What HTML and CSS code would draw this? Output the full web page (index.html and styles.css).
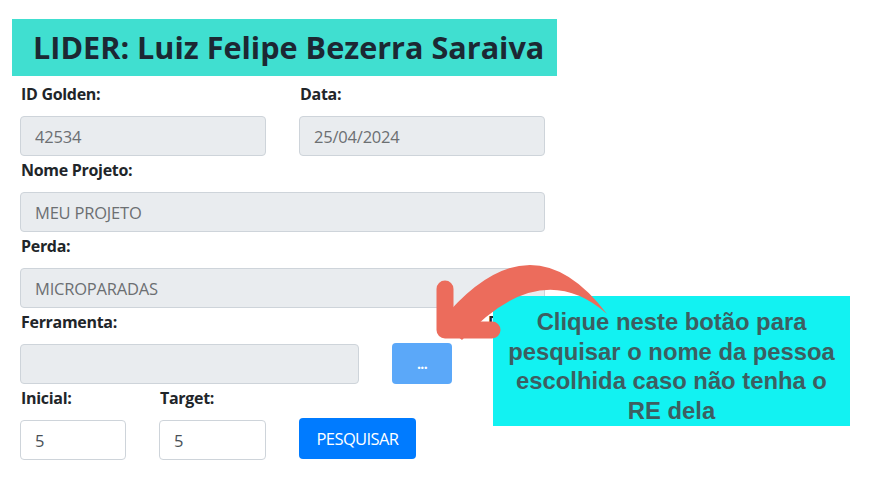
FILE: index.html
```html
<!DOCTYPE html>
<html lang="pt-BR">
<head>
<meta charset="utf-8">
<title>Líder</title>
<link rel="stylesheet" href="styles.css">
</head>
<body>
<div class="page">
  <h1 class="title">LIDER: Luiz Felipe Bezerra Saraiva</h1>
  <form class="form">
    <div class="row cols-2">
      <div class="field">
        <label>ID Golden:</label>
        <input class="input disabled" value="42534" disabled>
      </div>
      <div class="field">
        <label>Data:</label>
        <input class="input disabled" value="25/04/2024" disabled>
      </div>
    </div>
    <div class="row">
      <div class="field">
        <label>Nome Projeto:</label>
        <input class="input disabled" value="MEU PROJETO" disabled>
      </div>
    </div>
    <div class="row">
      <div class="field">
        <label>Perda:</label>
        <input class="input disabled" value="MICROPARADAS" disabled>
      </div>
    </div>
    <div class="row cols-tool">
      <div class="field">
        <label>Ferramenta:</label>
        <input class="input disabled" value="" disabled>
      </div>
      <div class="field">
        <label>&nbsp;</label>
        <button type="button" class="btn btn-light-primary">...</button>
      </div>
      <div class="field field-re">
        <label>RE:</label>
        <input class="input" value="">
      </div>
    </div>
    <div class="row cols-num">
      <div class="field">
        <label>Inicial:</label>
        <input class="input" value="5">
      </div>
      <div class="field">
        <label>Target:</label>
        <input class="input" value="5">
      </div>
      <div class="field">
        <label>&nbsp;</label>
        <button type="button" class="btn btn-primary">PESQUISAR</button>
      </div>
    </div>
  </form>
</div>

<div class="callout">Clique neste botão para pesquisar o nome da pessoa escolhida caso não tenha o RE dela</div>

<svg class="arrow" width="875" height="500" viewBox="0 0 875 500" aria-hidden="true">
  <path d="M440 322 Q530 212 607 314 Q540 255 462 340 Z" fill="#ec6c5c"/>
  <polyline points="445,289 445,330 492,330" fill="none" stroke="#ec6c5c" stroke-width="17" stroke-linecap="round" stroke-linejoin="round"/>
</svg>
</body>
</html>
```

FILE: styles.css
```css
html, body {
  margin: 0;
  padding: 0;
  background: #ffffff;
}

body {
  font-family: "Open Sans", "Noto Sans", Arial, sans-serif;
  color: #212529;
  width: 875px;
  height: 500px;
  overflow: hidden;
  position: relative;
}

.page {
  padding: 19px 0 0 12px;
}

.title {
  margin: 0;
  width: 545px;
  height: 57px;
  box-sizing: border-box;
  padding-left: 21px;
  background: #40dfd0;
  color: #1c2833;
  font-size: 30.6px;
  font-weight: 700;
  line-height: 57px;
  white-space: nowrap;
  overflow: hidden;
}

.form {
  margin: 6px 0 0 8px;
  width: 525px;
  display: flex;
  flex-direction: column;
  gap: 2px;
}

.row {
  display: grid;
  grid-template-columns: 1fr;
  column-gap: 33px;
}

.row.cols-2 {
  grid-template-columns: 246px 246px;
}

.row.cols-tool {
  grid-template-columns: 339px 60px 1fr;
}

.row.cols-tool .field-re {
  margin-left: 2px;
}

.field-re .input {
  margin-left: 8px;
}

.row.cols-num {
  grid-template-columns: 106px 107px 117px;
}

.field {
  display: flex;
  flex-direction: column;
}

.field label {
  display: block;
  height: 24px;
  line-height: 24px;
  margin-bottom: 10px;
  font-size: 16px;
  font-weight: 700;
  letter-spacing: -0.3px;
  color: #212529;
  padding-left: 1px;
  white-space: nowrap;
}

.input {
  box-sizing: border-box;
  height: 40px;
  width: 100%;
  margin: 0;
  padding: 0 14px;
  border: 1px solid #ced4da;
  border-radius: 4px;
  background: #ffffff;
  font-family: "Open Sans", "Noto Sans", Arial, sans-serif;
  font-size: 16.5px;
  letter-spacing: -0.2px;
  color: #495057;
}

.input.disabled {
  background: #e9ecef;
  color: #6c6f72;
  -webkit-text-fill-color: #6c6f72;
  opacity: 1;
}

.btn {
  box-sizing: border-box;
  height: 41px;
  width: 100%;
  margin: 0;
  border: none;
  border-radius: 4px;
  color: #ffffff;
  font-family: "Open Sans", "Noto Sans", Arial, sans-serif;
  font-size: 16.5px;
  padding: 0;
  letter-spacing: -0.6px;
}

.btn-primary {
  background: #007bff;
  margin-top: -2px;
}

.btn-light-primary {
  background: #5ba8f9;
  margin-top: -1px;
  font-size: 14px;
  font-weight: 700;
}

.callout {
  position: absolute;
  left: 493px;
  top: 296px;
  width: 357px;
  height: 130px;
  box-sizing: border-box;
  padding: 11px 4px 0;
  background: #12f2f2;
  color: #3d5e61;
  font-family: "Liberation Sans", Arial, sans-serif;
  font-weight: 700;
  font-size: 23.8px;
  line-height: 29.5px;
  text-align: center;
}

.arrow {
  position: absolute;
  left: 0;
  top: 0;
  pointer-events: none;
}
```
